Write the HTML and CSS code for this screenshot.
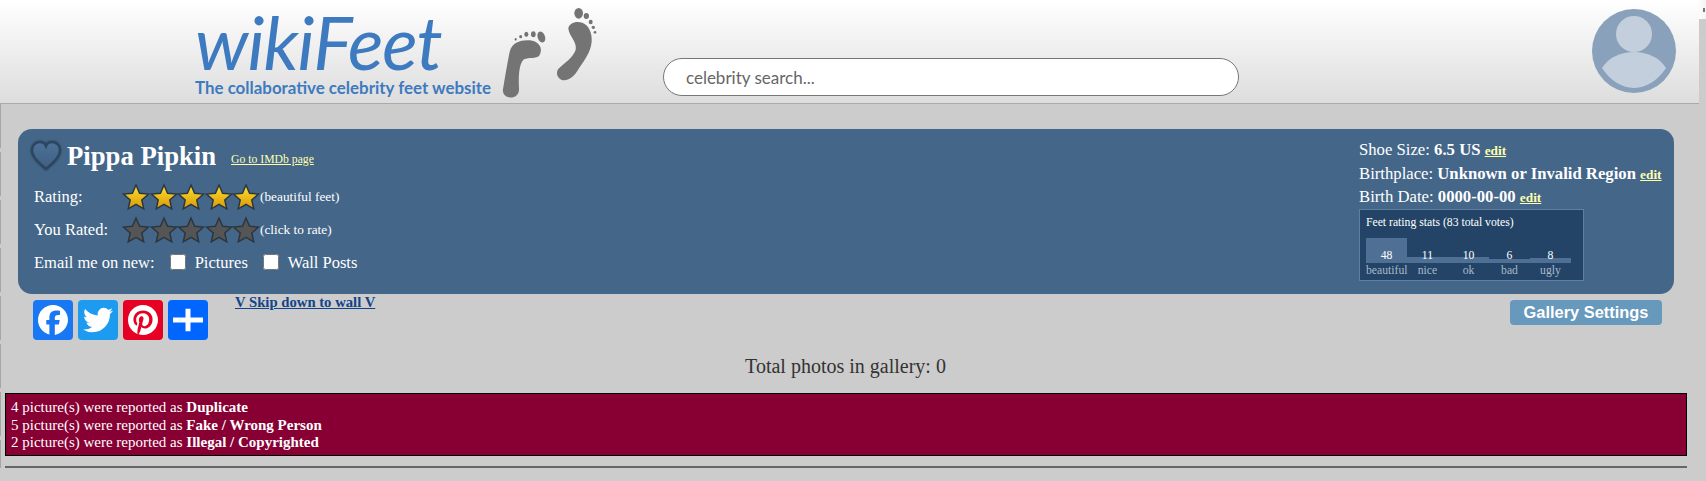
FILE: index.html
```html
<!DOCTYPE html>
<html lang="en">
<head>
    <meta charset="UTF-8">
    <meta name="viewport" content="width=device-width, initial-scale=1.0">
    <title>Pippa Pipkin - wikiFeet</title>
    <link rel="stylesheet" href="styles.css">
</head>
<body>
    <svg class="svg-defs" width="0" height="0">
        <defs>
            <linearGradient id="goldFill" x1="0" y1="0" x2="0" y2="1">
                <stop offset="0" stop-color="#ffe02c"/>
                <stop offset="1" stop-color="#d9990a"/>
            </linearGradient>
            <linearGradient id="heartFill" x1="0" y1="0" x2="0" y2="1">
                <stop offset="0" stop-color="#4d7199"/>
                <stop offset="1" stop-color="#3f5f80"/>
            </linearGradient>
            <symbol id="star" viewBox="0 0 28 28">
                <path d="M14 2l3.6 8.2 8.9.9-6.700 5.900 1.900 8.800L14 21.300 6.300 25.800l1.900-8.800-6.700-5.900 8.900-.9z"/>
            </symbol>
        </defs>
    </svg>

    <header class="site-header">
        <div class="logo">
            <div class="logo-name">wikiFeet</div>
            <div class="logo-tag">The collaborative celebrity feet website</div>
        </div>
        <svg class="logo-feet" viewBox="0 0 420 315" fill="#747474">
            <path d="M72 268C78 230 85 190 92 155 100 125 130 118 160 122 185 128 192 150 180 168 172 176 150 172 135 178 120 190 118 230 120 265 122 285 105 295 90 292 78 290 70 280 72 268Z"/>
            <ellipse cx="187" cy="111" rx="11" ry="17" transform="rotate(-20 187 111)"/>
            <ellipse cx="163" cy="103" rx="7" ry="9"/>
            <ellipse cx="142" cy="103" rx="6" ry="8"/>
            <ellipse cx="125" cy="110" rx="4.500" ry="5"/>
            <ellipse cx="110" cy="118" rx="3" ry="4"/>
            <path d="M268 85C270 70 290 62 310 68 330 75 340 100 338 125 335 155 320 175 300 205 285 232 265 245 248 240 232 232 230 215 240 205 255 190 280 175 290 150 295 125 270 110 268 85Z"/>
            <ellipse cx="299" cy="40" rx="13" ry="16"/>
            <ellipse cx="322" cy="48" rx="8" ry="9"/>
            <ellipse cx="335" cy="66" rx="6" ry="7"/>
            <ellipse cx="343" cy="82" rx="5" ry="5"/>
            <ellipse cx="348" cy="97" rx="4" ry="4"/>
        </svg>
        <input class="search" type="text" placeholder="celebrity search...">
        <svg class="avatar" viewBox="0 0 84 84">
            <circle cx="42" cy="42" r="42" fill="#8aa1bb"/>
            <circle cx="42" cy="25" r="18" fill="#c3cfdc"/>
            <path d="M10 59C17 48 29 43 42 43s25 5 32 16C67 70 55 79 42 79S17 70 10 59Z" fill="#c3cfdc"/>
        </svg>
    </header>
    <div class="corner-mark"></div>

    <main class="page">
        <section class="profile">
            <div class="profile-left">
                <div class="name-row">
                    <svg class="heart" viewBox="0 0 32 32">
                        <path d="M16 29C9 23 2 17 2 10 2 5 6 2 10 2c3 0 5 1.500 6 4 1-2.500 3-4 6-4 4 0 8 3 8 8 0 7-7 13-14 19Z" fill="url(#heartFill)" stroke="#2d4660" stroke-width="2.500"/>
                    </svg>
                    <h1>Pippa Pipkin</h1>
                    <a class="imdb" href="#">Go to IMDb page</a>
                </div>
                <div class="rate-row">
                    <span class="rate-label">Rating:</span>
                    <span class="stars gold">
                        <svg><use href="#star"/></svg><svg><use href="#star"/></svg><svg><use href="#star"/></svg><svg><use href="#star"/></svg><svg><use href="#star"/></svg>
                    </span>
                    <small>(beautiful feet)</small>
                </div>
                <div class="rate-row">
                    <span class="rate-label">You Rated:</span>
                    <span class="stars grey">
                        <svg><use href="#star"/></svg><svg><use href="#star"/></svg><svg><use href="#star"/></svg><svg><use href="#star"/></svg><svg><use href="#star"/></svg>
                    </span>
                    <small>(click to rate)</small>
                </div>
                <div class="email-row">
                    <span>Email me on new:</span>
                    <label><input type="checkbox"> Pictures</label>
                    <label><input type="checkbox"> Wall Posts</label>
                </div>
            </div>
            <div class="profile-right">
                <div class="fact">Shoe Size: <b>6.5 US</b> <a href="#">edit</a></div>
                <div class="fact">Birthplace: <b>Unknown or Invalid Region</b> <a href="#">edit</a></div>
                <div class="fact">Birth Date: <b>0000-00-00</b> <a href="#">edit</a></div>
                <div class="stats">
                    <div class="stats-title">Feet rating stats (83 total votes)</div>
                    <div class="bars">
                        <div class="bar-col"><div class="bar" style="height: 25px"></div><span class="count">48</span><span class="bar-name">beautiful</span></div>
                        <div class="bar-col"><div class="bar" style="height: 6px"></div><span class="count">11</span><span class="bar-name">nice</span></div>
                        <div class="bar-col"><div class="bar" style="height: 6px"></div><span class="count">10</span><span class="bar-name">ok</span></div>
                        <div class="bar-col"><div class="bar" style="height: 4px"></div><span class="count">6</span><span class="bar-name">bad</span></div>
                        <div class="bar-col"><div class="bar" style="height: 5px"></div><span class="count">8</span><span class="bar-name">ugly</span></div>
                    </div>
                </div>
            </div>
        </section>

        <div class="toolbar">
            <div class="share">
                <a class="share-btn fb" href="#"><svg viewBox="0 0 32 32"><path fill="#fff" d="M28 16c0-6.627-5.373-12-12-12S4 9.373 4 16c0 5.628 3.875 10.350 9.101 11.647v-7.980h-2.474V16H13.100v-1.580c0-4.085 1.849-5.978 5.859-5.978.76 0 2.072.15 2.608.298v3.325c-.283-.03-.775-.045-1.386-.045-1.967 0-2.728.745-2.728 2.683V16h3.920l-.673 3.667h-3.247v8.245C22.395 27.195 28 22.252 28 16"/></svg></a>
                <a class="share-btn tw" href="#"><svg viewBox="0 0 32 32"><path fill="#fff" d="M28 8.557a10 10 0 0 1-2.828.775 4.930 4.930 0 0 0 2.166-2.725 9.700 9.700 0 0 1-3.130 1.194 4.920 4.920 0 0 0-3.593-1.550 4.924 4.924 0 0 0-4.794 6.049c-4.090-.21-7.720-2.170-10.150-5.150a4.940 4.940 0 0 0-.665 2.477c0 1.710.87 3.214 2.190 4.100a5 5 0 0 1-2.230-.616v.06c0 2.390 1.700 4.380 3.952 4.830-.414.115-.85.174-1.297.174q-.476-.001-.928-.086a4.935 4.935 0 0 0 4.600 3.420 9.900 9.900 0 0 1-6.114 2.107q-.597 0-1.175-.068a13.950 13.950 0 0 0 7.550 2.213c9.056 0 14.010-7.507 14.010-14.013q0-.32-.015-.637c.96-.695 1.795-1.560 2.455-2.550z"/></svg></a>
                <a class="share-btn pin" href="#"><svg viewBox="0 0 32 32"><path fill="#fff" d="M15.995 4C9.361 4 4 9.370 4 15.995c0 5.084 3.160 9.428 7.622 11.176-.109-.948-.198-2.410.039-3.446.217-.938 1.402-5.963 1.402-5.963s-.356-.72-.356-1.777c0-1.668.968-2.912 2.172-2.912 1.027 0 1.520.77 1.520 1.688 0 1.027-.65 2.567-.996 3.998-.287 1.195.602 2.172 1.777 2.172 2.132 0 3.771-2.250 3.771-5.489 0-2.873-2.063-4.877-5.015-4.877-3.416 0-5.420 2.557-5.420 5.203 0 1.027.395 2.132.888 2.735a.36.36 0 0 1 .08.34c-.09.375-.297 1.195-.336 1.363-.05.217-.178.266-.405.158-1.481-.711-2.409-2.903-2.409-4.660 0-3.781 2.745-7.257 7.928-7.257 4.156 0 7.394 2.962 7.394 6.931 0 4.137-2.606 7.464-6.220 7.464-1.214 0-2.360-.632-2.744-1.383l-.75 2.854c-.267 1.046-.998 2.349-1.491 3.149a12.100 12.100 0 0 0 3.554.533C22.629 28 28 22.630 28 16.005 27.990 9.370 22.620 4 15.995 4"/></svg></a>
                <a class="share-btn more" href="#"><svg viewBox="0 0 32 32"><path fill="#fff" d="M14 7h4v18h-4z"/><path fill="#fff" d="M28 14v4H4v-4z"/></svg></a>
            </div>
            <a class="skip" href="#">V Skip down to wall V</a>
            <button class="gallery-settings" type="button">Gallery Settings</button>
        </div>

        <p class="total">Total photos in gallery: 0</p>

        <div class="reports">
            4 picture(s) were reported as <b>Duplicate</b><br>
            5 picture(s) were reported as <b>Fake / Wrong Person</b><br>
            2 picture(s) were reported as <b>Illegal / Copyrighted</b>
        </div>
        <hr class="rule">
    </main>
</body>
</html>
```

FILE: styles.css
```css
html, body {
    height: 100%;
}
body {
    margin: 0;
    background-color: #cccccc;
    font-family: "Liberation Serif", serif;
    color: #fff;
    overflow: hidden;
}
a {
    color: #ffffaa;
}
.svg-defs {
    display: block;
    height: 0;
}

/* header */
.site-header {
    display: flex;
    width: 1699px;
    height: 103px;
    border-bottom: 1px solid #aaaaaa;
    background: linear-gradient(#ffffff, #dddddd);
}
.corner-mark {
    position: absolute;
    top: 0;
    right: 0;
    width: 7px;
    height: 19px;
    background: linear-gradient(90deg, #fdfdfd, #f4f4f4);
}
.corner-mark::after {
    content: "";
    position: absolute;
    top: 8px;
    right: 1px;
    width: 2px;
    height: 4px;
    background: #777;
}
.logo {
    margin-left: 195px;
    color: #3d7abf;
    font-family: Lato, sans-serif;
}
.logo-name {
    margin-top: 5px;
    font-size: 74px;
    font-style: italic;
    line-height: 73px;
    letter-spacing: -1px;
}
.logo-tag {
    font-size: 16.900px;
    font-weight: 700;
    line-height: 20px;
    white-space: nowrap;
}
.logo-feet {
    width: 140px;
    height: 105px;
    margin-left: -12px;
    flex-shrink: 0;
}
.search {
    width: 576px;
    height: 38px;
    box-sizing: border-box;
    margin: 58px 0 0 44px;
    padding: 0 22px;
    border: 1px solid #777;
    border-radius: 19px;
    background: #fff;
    font-family: Lato, sans-serif;
    font-size: 17px;
    outline: none;
}
.search::placeholder {
    color: #666;
}
.avatar {
    width: 84px;
    height: 84px;
    margin: 9px 0 0 353px;
    flex-shrink: 0;
}

/* page */
.page {
    padding: 25px 19px 0 5px;
    background: repeating-linear-gradient(#a6a6a6 0, #a6a6a6 44px, #cccccc 44px, #cccccc 48px) left top / 1px 100% no-repeat;
}
.profile {
    display: flex;
    justify-content: space-between;
    height: 165px;
    margin: 0 13px;
    border-radius: 14px;
    background-color: #446689;
    font-size: 16.500px;
}
.profile-left {
    padding: 9px 0 0 12px;
}
.name-row {
    display: flex;
    align-items: center;
    height: 36px;
    margin-bottom: 6px;
}
.heart {
    width: 32px;
    height: 32px;
    margin-right: 5px;
    filter: drop-shadow(0 0 1px #2d4660);
}
h1 {
    margin: 0;
    font-size: 26.700px;
    font-weight: bold;
    white-space: nowrap;
}
.imdb {
    margin: 6px 0 0 15px;
    font-size: 11.700px;
}
.rate-row {
    display: flex;
    align-items: center;
    height: 33px;
    padding-left: 4px;
}
.rate-label {
    width: 88px;
}
.stars {
    display: flex;
    width: 138px;
}
.stars svg {
    width: 28px;
    height: 28px;
    margin-right: -0.5px;
    stroke: #2b3640;
    stroke-width: 1.500;
}
.gold svg {
    fill: url(#goldFill);
}
.grey svg {
    fill: #555;
}
.rate-row small {
    font-size: 13.300px;
}
.email-row {
    display: flex;
    align-items: center;
    height: 34px;
    padding-left: 4px;
}
.email-row input {
    width: 16px;
    height: 16px;
    margin: 0 5px 0 0;
    vertical-align: -2px;
}
.email-row label {
    margin-left: 15px;
}
.profile-right {
    width: 303px;
    padding-top: 9px;
    margin-right: 12px;
    box-sizing: border-box;
    font-size: 16.700px;
}
.fact {
    height: 23.500px;
    line-height: 23.500px;
    white-space: nowrap;
}
.fact a {
    font-size: 13.300px;
    font-weight: bold;
}
.stats {
    width: 225px;
    height: 72px;
    box-sizing: border-box;
    margin-top: 0;
    padding: 6px 6px 0;
    border: 1px solid #5f7fa0;
    background-color: #234466;
    font-size: 11.700px;
}
.stats-title {
    height: 21px;
}
.bars {
    display: flex;
}
.bar-col {
    position: relative;
    display: flex;
    flex-direction: column;
    justify-content: flex-end;
    width: 41px;
    height: 41px;
    text-align: center;
}
.bar {
    position: absolute;
    left: 0;
    right: 0;
    bottom: 15px;
    background-color: #4f7094;
}
.count {
    position: relative;
    line-height: 14px;
}
.bar-name {
    color: #a9b9cb;
    line-height: 15px;
}

/* share + settings row */
.toolbar {
    display: flex;
    align-items: flex-start;
    height: 51px;
}
.share {
    display: flex;
    gap: 5px;
    margin: 6px 0 0 28px;
}
.share-btn {
    display: block;
    width: 40px;
    height: 40px;
    border-radius: 4px;
}
.share-btn svg {
    display: block;
    width: 40px;
    height: 40px;
}
.fb { background-color: #1877f2; }
.tw { background-color: #1d9bf0; }
.pin { background-color: #e60023; }
.more { background-color: #0166ff; }
.skip {
    margin: 0 0 0 27px;
    color: #114488;
    font-size: 14.700px;
    font-weight: bold;
}
.gallery-settings {
    width: 152px;
    height: 25px;
    margin: 6px 25px 0 auto;
    padding: 0;
    border: none;
    border-radius: 4px;
    background-color: #6699bb;
    color: #fff;
    font-family: "Liberation Sans", sans-serif;
    font-size: 16.400px;
    font-weight: bold;
}
.total {
    margin: 0;
    padding-right: 1px;
    height: 48px;
    line-height: 42px;
    color: #333;
    font-size: 20px;
    text-align: center;
}
.reports {
    height: 56px;
    padding: 5px 5px 0;
    border: 1px solid #000;
    box-sizing: content-box;
    width: 1670px;
    background-color: #880033;
    font-size: 15px;
    line-height: 17.500px;
}
.rule {
    height: 2px;
    margin: 10px 0 0;
    border: none;
    background-color: #666;
    width: 1682px;
}
```
